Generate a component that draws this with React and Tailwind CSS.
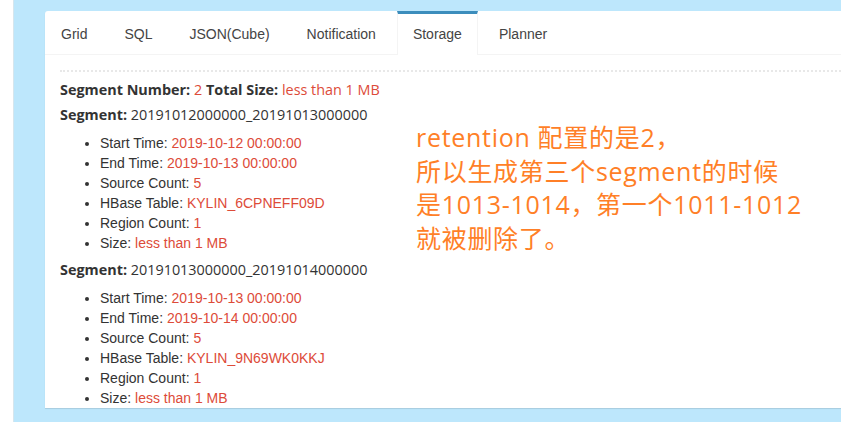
import React from 'react';

const TABS = ['Grid', 'SQL', 'JSON(Cube)', 'Notification', 'Storage', 'Planner'];

const SEGMENTS = [
  {
    name: '20191012000000_20191013000000',
    start: '2019-10-12 00:00:00',
    end: '2019-10-13 00:00:00',
    table: 'KYLIN_6CPNEFF09D',
  },
  {
    name: '20191013000000_20191014000000',
    start: '2019-10-13 00:00:00',
    end: '2019-10-14 00:00:00',
    table: 'KYLIN_9N69WK0KKJ',
  },
];

const Item = ({ label, value }) => (
  <li>
    {label}: <span className="text-[#dd4b39]">{value}</span>
  </li>
);

const Segment = ({ s }) => (
  <div>
    <div className="mt-[5px] font-['Open_Sans',sans-serif] text-[14.4px] leading-[20px]">
      <b>Segment:</b> {s.name}
    </div>
    <ul className="mt-[8px] mb-[7px] list-disc pl-[40px] font-['Liberation_Sans',Arial,sans-serif] text-[14px] leading-[20px]">
      <Item label="Start Time" value={s.start} />
      <Item label="End Time" value={s.end} />
      <Item label="Source Count" value="5" />
      <Item label="HBase Table" value={s.table} />
      <Item label="Region Count" value="1" />
      <Item label="Size" value="less than 1 MB" />
    </ul>
  </div>
);

export default function App() {
  return (
    <div className="flex h-[422px] w-[841px] overflow-hidden bg-white">
      <div className="w-[14px] shrink-0 border-r border-[#d6e6ee] bg-white" />
      <div className="flex-1 bg-[#bde7fc] pl-[31px] pt-[11px]">
        <div className="relative h-[397px] overflow-hidden rounded-tl-[3px] bg-white text-[#333] shadow-[0_1px_1px_rgba(0,0,0,0.12)]">
          <div className="flex border-b border-[#f4f4f4] font-['Liberation_Sans',Arial,sans-serif] text-[14px] text-[#444]">
            {TABS.map((t) => {
              const active = t === 'Storage';
              return (
                <div
                  key={t}
                  className={
                    active
                      ? 'mr-[5px] -mb-px border-x border-t-[3px] border-x-[#f4f4f4] border-t-[#3c8dbc] bg-white px-[15px] py-[10px] leading-[20px]'
                      : 'mr-[5px] border-x border-t-[3px] border-transparent px-[15px] py-[10px] leading-[20px]'
                  }
                >
                  {t}
                </div>
              );
            })}
          </div>
          <div className="pl-[15px] pt-[15px]">
            <div className="h-0 border-t-2 border-dotted border-[#e8e8e8]" />
            <div className="mt-[8px] font-['Open_Sans',sans-serif] text-[14.4px] leading-[20px]">
              <b>Segment Number:</b> <span className="text-[#dd4b39]">2</span> <b>Total Size:</b>{' '}
              <span className="text-[#dd4b39]">less than 1 MB</span>
            </div>
            {SEGMENTS.map((s) => (
              <Segment key={s.name} s={s} />
            ))}
          </div>
          <div className="absolute left-[371px] top-[110px] font-['Open_Sans','Noto_Sans_CJK_SC',sans-serif] text-[25px] leading-[33.5px] tracking-[0.7px] text-[#ff7f27]">
            <div>retention 配置的是2，</div>
            <div>所以生成第三个segment的时候</div>
            <div>是1013-1014，第一个1011-1012</div>
            <div>就被删除了。</div>
          </div>
        </div>
      </div>
    </div>
  );
}
